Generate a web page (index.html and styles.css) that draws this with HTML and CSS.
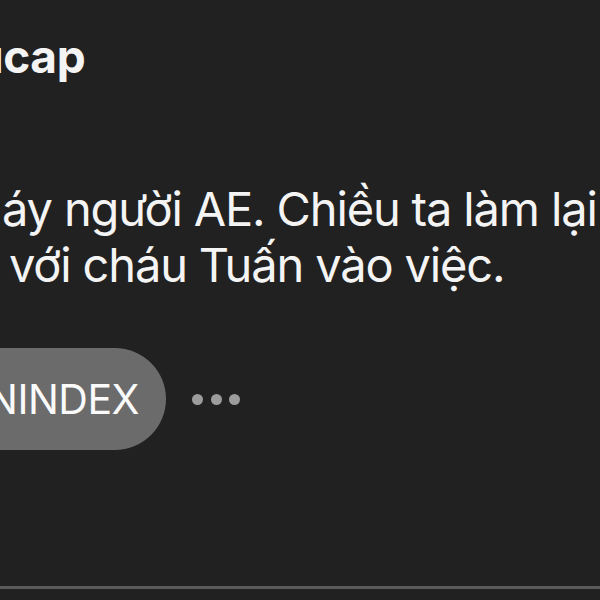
FILE: index.html
```html
<!DOCTYPE html>
<html lang="vi">
<head>
<meta charset="utf-8">
<link rel="stylesheet" href="styles.css">
</head>
<body>
<div class="page">
  <div class="title">ucap</div>
  <div class="message">
    <div class="line line-1">áy người AE. Chiều ta làm lại</div>
    <div class="line line-2">với cháu Tuấn vào việc.</div>
  </div>
  <div class="actions">
    <div class="tag">NINDEX</div>
    <div class="more"><span class="dot"></span><span class="dot"></span><span class="dot"></span></div>
  </div>
  <div class="divider"></div>
</div>
</body>
</html>
```

FILE: styles.css
```css
html, body {
  margin: 0;
  padding: 0;
  background: #212121;
}
.page {
  width: 600px;
  height: 600px;
  overflow: hidden;
  font-family: Inter, "Noto Sans", sans-serif;
  color: #f4f4f4;
}
.title {
  padding-top: 28px;
  height: 56px;
  font-size: 46px;
  line-height: 56px;
  font-weight: 700;
  margin-left: -25px;
  letter-spacing: -0.4px;
  white-space: nowrap;
}
.message {
  margin-top: 97px;
  font-size: 47px;
  line-height: 56px;
  letter-spacing: -1.15px;
}
.line {
  white-space: pre;
}
.line-1 { margin-left: 2px; }
.line-2 { margin-left: 9px; }
.actions {
  margin-top: 55px;
  display: flex;
  align-items: center;
  gap: 26px;
}
.tag {
  height: 102px;
  border-radius: 51px;
  background: #6b6b6b;
  color: #fafafa;
  font-size: 41px;
  line-height: 102px;
  letter-spacing: -0.5px;
  padding: 0 27px 0 50px;
  margin-left: -63px;
}
.more {
  display: flex;
  gap: 7.5px;
}
.dot {
  width: 11px;
  height: 11px;
  border-radius: 50%;
  background: #9c9c9c;
}
.divider {
  margin-top: 136px;
  height: 3px;
  background: #5a5a5a;
}
```
